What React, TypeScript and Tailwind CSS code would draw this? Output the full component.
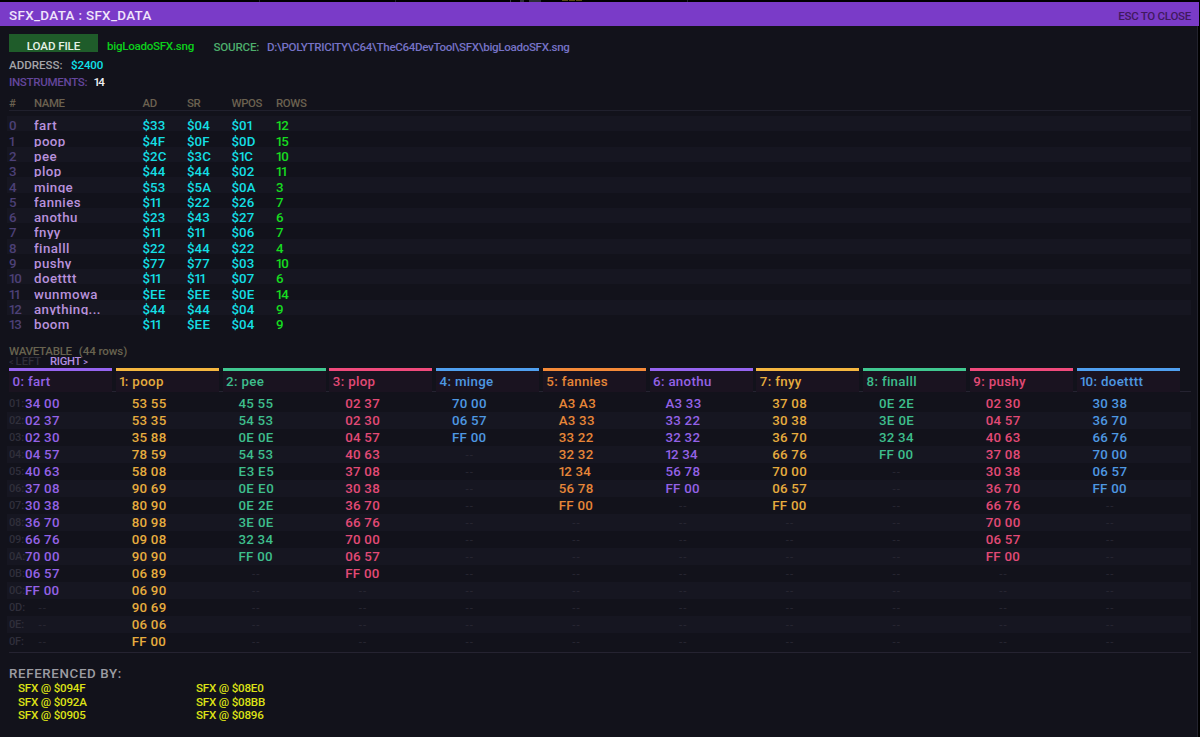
type Instrument = [name: string, ad: string, sr: string, wpos: string, rows: number];

const instruments: Instrument[] = [
  ['fart', '$33', '$04', '$01', 12],
  ['poop', '$4F', '$0F', '$0D', 15],
  ['pee', '$2C', '$3C', '$1C', 10],
  ['plop', '$44', '$44', '$02', 11],
  ['minge', '$53', '$5A', '$0A', 3],
  ['fannies', '$11', '$22', '$26', 7],
  ['anothu', '$23', '$43', '$27', 6],
  ['fnyy', '$11', '$11', '$06', 7],
  ['finalll', '$22', '$44', '$22', 4],
  ['pushy', '$77', '$77', '$03', 10],
  ['doetttt', '$11', '$11', '$07', 6],
  ['wunmowa', '$EE', '$EE', '$0E', 14],
  ['anything...', '$44', '$44', '$04', 9],
  ['boom', '$11', '$EE', '$04', 9],
];

const violet = { bar: 'bg-[#9664f0]', text: 'text-[#9462e6]' };
const amber = { bar: 'bg-[#f5b740]', text: 'text-[#e6ac3e]' };
const green = { bar: 'bg-[#40c890]', text: 'text-[#3ebe8c]' };
const pink = { bar: 'bg-[#f04a7c]', text: 'text-[#e24a76]' };
const blue = { bar: 'bg-[#50a0f0]', text: 'text-[#4e98e2]' };
const orange = { bar: 'bg-[#f58a38]', text: 'text-[#e68638]' };

const waves = [
  { label: '0: fart', tone: violet, data: ['34 00', '02 37', '02 30', '04 57', '40 63', '37 08', '30 38', '36 70', '66 76', '70 00', '06 57', 'FF 00'] },
  { label: '1: poop', tone: amber, data: ['53 55', '53 35', '35 88', '78 59', '58 08', '90 69', '80 90', '80 98', '09 08', '90 90', '06 89', '06 90', '90 69', '06 06', 'FF 00'] },
  { label: '2: pee', tone: green, data: ['45 55', '54 53', '0E 0E', '54 53', 'E3 E5', '0E E0', '0E 2E', '3E 0E', '32 34', 'FF 00'] },
  { label: '3: plop', tone: pink, data: ['02 37', '02 30', '04 57', '40 63', '37 08', '30 38', '36 70', '66 76', '70 00', '06 57', 'FF 00'] },
  { label: '4: minge', tone: blue, data: ['70 00', '06 57', 'FF 00'] },
  { label: '5: fannies', tone: orange, data: ['A3 A3', 'A3 33', '33 22', '32 32', '12 34', '56 78', 'FF 00'] },
  { label: '6: anothu', tone: violet, data: ['A3 33', '33 22', '32 32', '12 34', '56 78', 'FF 00'] },
  { label: '7: fnyy', tone: amber, data: ['37 08', '30 38', '36 70', '66 76', '70 00', '06 57', 'FF 00'] },
  { label: '8: finalll', tone: green, data: ['0E 2E', '3E 0E', '32 34', 'FF 00'] },
  { label: '9: pushy', tone: pink, data: ['02 30', '04 57', '40 63', '37 08', '30 38', '36 70', '66 76', '70 00', '06 57', 'FF 00'] },
  { label: '10: doetttt', tone: blue, data: ['30 38', '36 70', '66 76', '70 00', '06 57', 'FF 00'] },
];

const references = [
  ['SFX @ $094F', 'SFX @ $08E0'],
  ['SFX @ $092A', 'SFX @ $08BB'],
  ['SFX @ $0905', 'SFX @ $0896'],
];

const instrumentGrid = 'grid grid-cols-[25px_108.5px_44.5px_44.5px_44.5px_1fr]';
const waveGrid = 'grid grid-cols-[repeat(11,106.75px)]';

// The digit "1" is narrow in this panel's lettering, so its neighbours close in on it.
function Hex({ text }: { text: string }) {
  return (
    <>
      {text.split('').map((ch, i) => (
        <span
          key={i}
          className={ch === '1' ? '-mr-[1.8px] -ml-[0.5px]' : ch === 'E' ? 'mr-[0.5px]' : ''}
        >
          {ch}
        </span>
      ))}
    </>
  );
}

// Sliver of the window behind the dialog, visible above its title bar.
function Backdrop() {
  return (
    <div className="flex h-0.5 gap-px pl-[259px]">
      <div className="mr-[134px] h-0.5 w-px bg-[#222230]" />
      <div className="mr-[113px] h-0.5 w-px bg-[#222230]" />
      <div className="h-0.5 w-px bg-[#3a3a48]" />
      <div className="ml-2 h-0.5 w-1 bg-[#2c2c38]" />
      <div className="mr-5 ml-1 h-0.5 w-3 bg-[#2c2c38]" />
      <div className="h-px w-1.5 bg-[#5a4a10]" />
      <div className="h-px w-1.5 bg-[#5a4a10]" />
      <div className="h-px w-1.5 bg-[#5a4a10]" />
      <div className="ml-[104px] h-0.5 w-px bg-[#222230]" />
    </div>
  );
}

function TitleBar() {
  return (
    <header className="mr-px flex h-6 items-center justify-between bg-[#7a3bc8] pt-[3px] pr-2 pl-[9px]">
      <h1 className="text-[13.4px] leading-4 font-medium tracking-[0.34px] text-[#f0e4fb]">SFX_DATA : SFX_DATA</h1>
      <span className="text-[11.5px] leading-4 font-medium tracking-[-0.27px] text-[#40195f]">ESC TO CLOSE</span>
    </header>
  );
}

function FileInfo() {
  return (
    <section className="pt-2 text-[11.6px] font-medium">
      <div className="flex h-[18px] leading-[12px]">
        <button className="h-[18px] w-[89px] bg-[#1f5c2a] pt-[6px] text-[11.6px] leading-[12px] tracking-[-0.12px] text-[#e6f2e6]">LOAD FILE</button>
        <span className="ml-[9px] w-[106.5px] pt-[6px] tracking-[-0.28px] text-[#0cd01c]">bigLoadoSFX.sng</span>
        <span className="w-[53.5px] pt-[7px] tracking-[-0.2px] text-[#4dae6c]">SOURCE:</span>
        <span className="pt-[7px] tracking-[-0.33px] text-[#7672c6]">D:\POLYTRICITY\C64\TheC64DevTool\SFX\bigLoadoSFX.sng</span>
      </div>
      <div className="mt-[5px] flex h-[17px] leading-[17px]">
        <span className="w-[62px] tracking-[-0.02px] text-[#a4a4a8]">ADDRESS:</span>
        <span className="tracking-[-0.15px] text-[#10e0ea]">$2400</span>
      </div>
      <div className="flex h-[17px] leading-[17px]">
        <span className="w-[85px] tracking-[-0.34px] text-[#64469c]">INSTRUMENTS:</span>
        <span className="text-[#f0f0f4]"><Hex text="14" /></span>
      </div>
    </section>
  );
}

function InstrumentTable() {
  return (
    <section className="pt-[5px]">
      <div className={`${instrumentGrid} h-[14px] text-[11.4px] leading-[14px] font-medium tracking-[-0.38px] text-[#6b6150]`}>
        <span>#</span>
        <span>NAME</span>
        <span>AD</span>
        <span>SR</span>
        <span>WPOS</span>
        <span>ROWS</span>
      </div>
      <div className="mb-[5.2px] h-px bg-[#20202d]" />
      {instruments.map(([name, ad, sr, wpos, rows], i) => (
        <div
          key={name}
          className={`${instrumentGrid} -ml-0.5 h-[15.3px] pt-[2.2px] pl-0.5 text-[13.3px] leading-[15px] font-medium ${i % 2 === 0 ? 'bg-[#161621]' : ''}`}
        >
          <span className="text-[#4c4076]"><Hex text={String(i)} /></span>
          <span className="h-[13.1px] overflow-hidden tracking-[0.42px] text-[#b891dc]">{name}</span>
          <span className="text-[#14dfe4]"><Hex text={ad} /></span>
          <span className="text-[#14dfe4]"><Hex text={sr} /></span>
          <span className="text-[#14dfe4]"><Hex text={wpos} /></span>
          <span className="text-[#16dc20]"><Hex text={String(rows)} /></span>
        </div>
      ))}
    </section>
  );
}

function Wavetable() {
  return (
    <section className="pt-[14.6px]">
      <div className="flex h-3 gap-[7px] text-[11.6px] leading-3 font-medium text-[#68634f]">
        <span className="tracking-[-0.32px]">WAVETABLE</span>
        <span className="tracking-[-0.1px]">(44 rows)</span>
      </div>
      <div className="flex h-[11px] text-[11.2px] leading-[9px] font-medium">
        <span className="w-[41px] text-[#302f3a]">
          <span className="mr-0.5 text-[9px]">&lt;</span>LEFT
        </span>
        <span className="tracking-[-0.25px] text-[#b18ee0]">
          RIGHT<span className="ml-0.5 text-[9px]">&gt;</span>
        </span>
      </div>
      <div className={`${waveGrid} h-[23px]`}>
        {waves.map(({ label, tone }) => {
          const [index, name] = label.split(': ');
          return (
            <div key={label} className="w-[103px] bg-[#1a1320]">
              <div className={`h-[3px] ${tone.bar}`} />
              <div className={`pl-[3.5px] text-[13.3px] leading-[21px] font-medium tracking-[0.33px] whitespace-pre ${tone.text}`}>
                <Hex text={index} />: {name}
              </div>
            </div>
          );
        })}
      </div>
      <div className="mb-[3.5px] h-px bg-[#252331]" />
      {Array.from({ length: 15 }, (_, row) => (
        <div key={row} className={`-ml-0.5 flex h-[17px] pl-0.5 ${row % 2 === 1 ? 'bg-[#161621]' : ''}`}>
          <span className="-mr-4 w-4 text-[11px] leading-[17px] font-medium tracking-[-0.15px] text-[#302f3b]">
            {`0${(row + 1).toString(16).toUpperCase()}:`}
          </span>
          <div className={`${waveGrid} flex-1 text-[13.3px] leading-[18px] font-medium`}>
            {waves.map(({ label, tone, data }) =>
              data[row] ? (
                <span key={label} className={`pl-4 tracking-[0.22px] whitespace-pre ${tone.text}`}><Hex text={data[row]} /></span>
              ) : (
                <span key={label} className="pl-[29.5px] text-[11.5px] font-normal tracking-[1px] text-[#292834]">--</span>
              ),
            )}
          </div>
        </div>
      ))}
      <div className="mt-[1.5px] h-px bg-[#252331]" />
    </section>
  );
}

function ReferencedBy() {
  return (
    <section className="pt-[13px]">
      <h2 className="h-4 text-[13.3px] leading-[16px] font-medium tracking-[0.65px] text-[#9c9ca2]">REFERENCED BY:</h2>
      <div className="text-[11.6px] leading-[13.7px] font-medium tracking-[-0.2px] text-[#dee216]">
        {references.map(([left, right]) => (
          <div key={left} className="grid h-[13.6px] grid-cols-[178px_1fr] pl-[9px]">
            <span>{left}</span>
            <span>{right}</span>
          </div>
        ))}
      </div>
    </section>
  );
}

export default function App() {
  return (
    <div className="h-[737px] w-[1200px] overflow-hidden bg-black font-['Roboto',sans-serif]">
      <Backdrop />
      <TitleBar />
      <main className="mr-0.5 h-[711px] border-r border-[#23232f] bg-[#12121b] pr-[6px] pl-[9px]">
        <FileInfo />
        <InstrumentTable />
        <Wavetable />
        <ReferencedBy />
      </main>
    </div>
  );
}
